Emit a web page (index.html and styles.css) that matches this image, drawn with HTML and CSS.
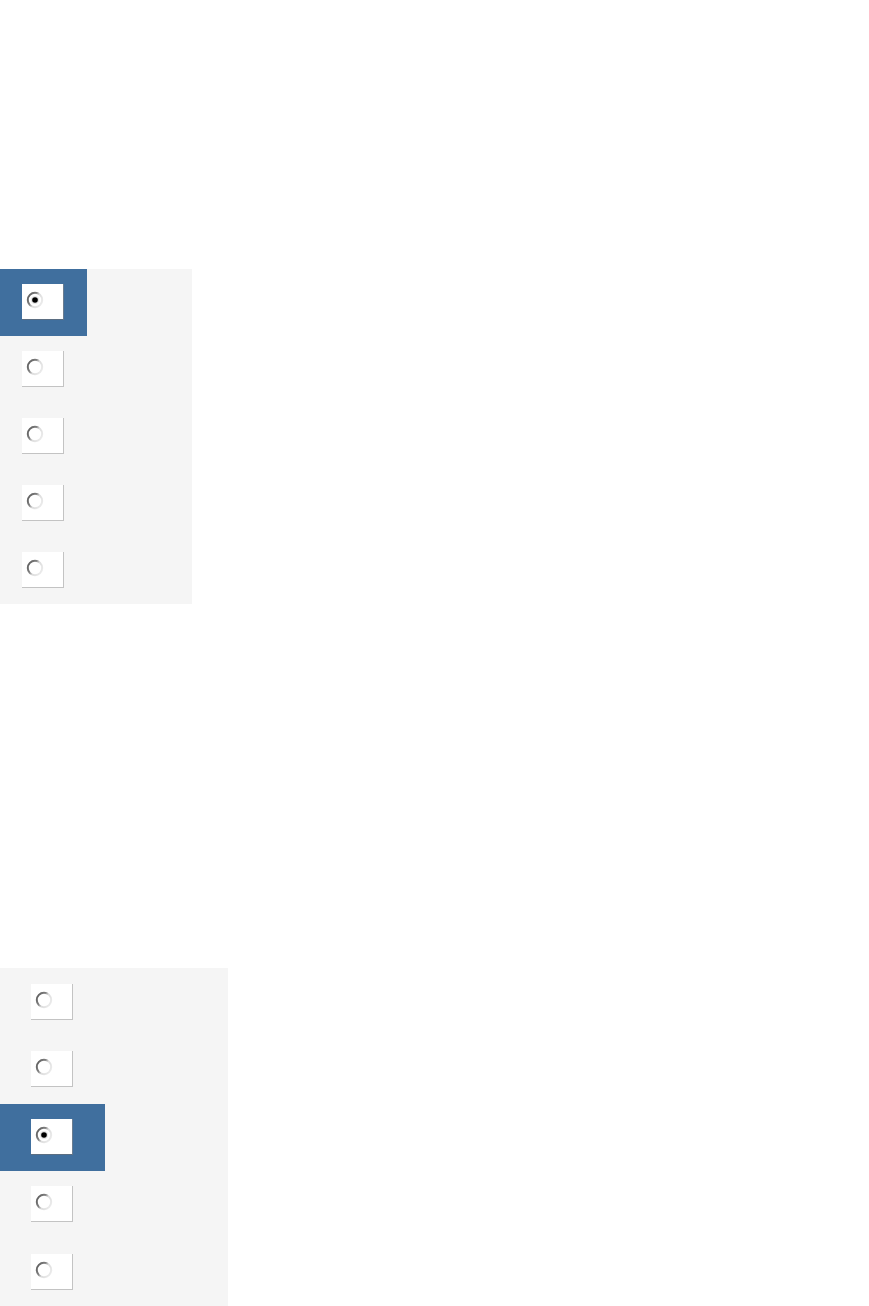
FILE: index.html
```html
<!doctype html>
<html lang="en">
<head>
  <meta charset="UTF-8">
  <title>单选列表</title>
  <link rel="stylesheet" href="styles.css">
</head>
<body>
  <svg width="0" height="0" class="defs">
    <defs>
      <linearGradient id="ring" x1="0" y1="0.2" x2="1" y2="0.8">
        <stop offset="0" stop-color="#5e5e5e"/>
        <stop offset="0.35" stop-color="#808080"/>
        <stop offset="0.55" stop-color="#dcdcdc"/>
        <stop offset="1" stop-color="#ececec"/>
      </linearGradient>
    </defs>
  </svg>

  <div class="panel panel-a">
    <label class="row on"><span class="box"><svg class="radio" viewBox="0 0 18 18"><circle cx="9" cy="9" r="7.2" fill="#fff" stroke="url(#ring)" stroke-width="2"/><circle cx="9" cy="9" r="4" fill="#e6e6e6"/><circle cx="9" cy="9" r="2.8" fill="#000"/></svg></span></label>
    <label class="row"><span class="box"><svg class="radio" viewBox="0 0 18 18"><circle cx="9" cy="9" r="7.2" fill="#fff" stroke="url(#ring)" stroke-width="2"/></svg></span></label>
    <label class="row"><span class="box"><svg class="radio" viewBox="0 0 18 18"><circle cx="9" cy="9" r="7.2" fill="#fff" stroke="url(#ring)" stroke-width="2"/></svg></span></label>
    <label class="row"><span class="box"><svg class="radio" viewBox="0 0 18 18"><circle cx="9" cy="9" r="7.2" fill="#fff" stroke="url(#ring)" stroke-width="2"/></svg></span></label>
    <label class="row"><span class="box"><svg class="radio" viewBox="0 0 18 18"><circle cx="9" cy="9" r="7.2" fill="#fff" stroke="url(#ring)" stroke-width="2"/></svg></span></label>
  </div>

  <div class="panel panel-b">
    <label class="row"><span class="box"><svg class="radio" viewBox="0 0 18 18"><circle cx="9" cy="9" r="7.2" fill="#fff" stroke="url(#ring)" stroke-width="2"/></svg></span></label>
    <label class="row"><span class="box"><svg class="radio" viewBox="0 0 18 18"><circle cx="9" cy="9" r="7.2" fill="#fff" stroke="url(#ring)" stroke-width="2"/></svg></span></label>
    <label class="row on"><span class="box"><svg class="radio" viewBox="0 0 18 18"><circle cx="9" cy="9" r="7.2" fill="#fff" stroke="url(#ring)" stroke-width="2"/><circle cx="9" cy="9" r="4" fill="#e6e6e6"/><circle cx="9" cy="9" r="2.8" fill="#000"/></svg></span></label>
    <label class="row"><span class="box"><svg class="radio" viewBox="0 0 18 18"><circle cx="9" cy="9" r="7.2" fill="#fff" stroke="url(#ring)" stroke-width="2"/></svg></span></label>
    <label class="row"><span class="box"><svg class="radio" viewBox="0 0 18 18"><circle cx="9" cy="9" r="7.2" fill="#fff" stroke="url(#ring)" stroke-width="2"/></svg></span></label>
  </div>
</body>
</html>
```

FILE: styles.css
```css
body{ margin:0; padding:0; font-family:"Liberation Sans", Arial, sans-serif; font-size:13px; background:#fff;}
.defs{ position:absolute; width:0; height:0;}

.panel{ display:flex; flex-direction:column; align-items:flex-start; background:#f5f5f5; overflow:hidden;}
.panel-a{ width:192px; height:335px; margin-top:269px;}
.panel-b{ width:228px; height:338px; margin-top:364px; padding-top:1px; box-sizing:border-box;}

.row{ display:block; box-sizing:border-box; height:67px; padding-top:15px; cursor:pointer;}
.panel-a .row{ padding-left:22px; padding-right:23px;}
.panel-b .row{ height:68px; padding-left:31px; padding-right:32px;}
.row.on{ background:#406f9e;}

.box{ display:block; box-sizing:border-box; width:42px; height:36px; background:#fff; border-right:1px solid #c3c3c3; border-bottom:1px solid #c3c3c3; padding:7px 0 0 4px;}
.row.on .box{ border-right-color:#6b7d90; border-bottom-color:#5b6e82;}
.radio{ display:block; width:18px; height:18px;}
```
